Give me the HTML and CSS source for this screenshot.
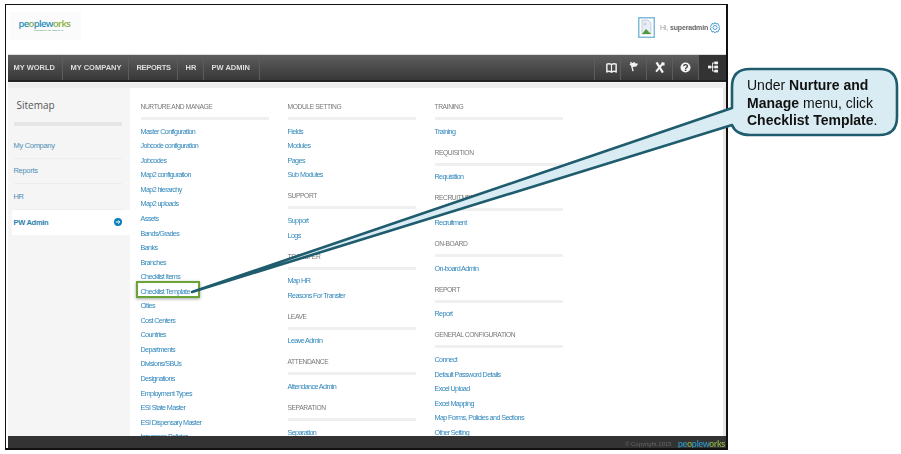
FILE: index.html
```html
<!DOCTYPE html>
<html lang="en">
<head>
<meta charset="utf-8">
<title>Sitemap</title>
<link rel="stylesheet" href="styles.css">
</head>
<body>
<div class="frame">
  <header class="top">
    <div class="logo">
      <div class="logo-word"><span class="b">pe</span><span class="g">o</span><span class="b">ple</span><span class="b">w</span><span class="g">o</span><span class="g">rks</span></div>
      <div class="logo-tag">PRESENTS LEADERSHIP</div>
    </div>
    <div class="user">
      <svg class="avatar" width="17" height="21" viewBox="0 0 17 21"><rect x="0.75" y="0.75" width="15.5" height="19.5" fill="#fff" stroke="#7fbcd9" stroke-width="1.5"/><path d="M4 3h6l3 3v11H4z" fill="#e8eef8" stroke="#b4bcc8" stroke-width="0.7"/><path d="M4 17l4-5 2 2 3 3z" fill="#4f9a3c"/><circle cx="7" cy="7" r="1.5" fill="#c4d3ea"/></svg>
      <span class="hi">Hi, <b>superadmin</b></span>
      <svg class="gear" width="10" height="11" viewBox="0 0 20 22"><path d="M10 1l2 3 4-1 1 4 3 2-2 2 2 3-3 2-1 4-4-1-2 3-2-3-4 1-1-4-3-2 2-3-2-2 3-2 1-4 4 1z" fill="none" stroke="#4f9fd0" stroke-width="2"/><circle cx="10" cy="11" r="4" fill="none" stroke="#4f9fd0" stroke-width="2"/></svg>
    </div>
  </header>

  <nav class="nav">
    <a class="nav-item nav-first">MY WORLD</a>
    <a class="nav-item nav-second">MY COMPANY</a>
    <a class="nav-item nav-third">REPORTS</a>
    <a class="nav-item nav-fourth">HR</a>
    <a class="nav-item nav-fifth">PW ADMIN</a>
    <div class="nav-icons">
      <span class="cell cell-book"><svg width="11" height="11" viewBox="0 0 13 13"><path d="M1 2.5c2-.8 4-.6 5.500.5 1.500-1.100 3.500-1.300 5.500-.5v9c-2-.8-4-.6-5.500.5-1.500-1.100-3.500-1.300-5.500-.5z" fill="none" stroke="#f1f1f1" stroke-width="1.700"/><path d="M6.500 3v9" stroke="#f1f1f1" stroke-width="1.400"/></svg></span>
      <span class="cell"><svg width="12" height="13" viewBox="0 0 13 14"><path d="M3 1l2.500 10" stroke="#f1f1f1" stroke-width="1.500" fill="none"/><path d="M1.500 3.500L7 1l1 1.500 3 .5-2 3-4 .5-1.500-1z" fill="#f1f1f1"/></svg></span>
      <span class="cell"><svg width="11" height="13" viewBox="0 0 13 14"><path d="M3 1l7.500 12" stroke="#f4f4f4" stroke-width="2.600" fill="none"/><path d="M11 1.500L2.500 12" stroke="#f4f4f4" stroke-width="2.400" fill="none"/><path d="M8.500 1h4v3.500h-2.500z" fill="#f4f4f4"/></svg></span>
      <span class="cell"><svg width="11" height="11" viewBox="0 0 12 12"><circle cx="6" cy="6" r="5.500" fill="#f4f4f4"/><path d="M4 4.700c0-2.400 4.100-2.400 4.100-.1 0 1.400-2 1.400-2 3" fill="none" stroke="#3d3d3d" stroke-width="1.400"/><rect x="5.300" y="8.300" width="1.600" height="1.500" fill="#3d3d3d"/></svg></span>
      <span class="cell cell-on"><svg width="10" height="12" viewBox="0 0 11 13"><path d="M2 6.500h6M5 2v9M5 2h3M5 11h3" stroke="#f1f1f1" stroke-width="1" fill="none"/><rect x="0" y="5" width="3.500" height="3" fill="#f1f1f1"/><rect x="7" y="0.500" width="4" height="3" fill="#f1f1f1"/><rect x="7" y="5" width="4" height="3" fill="#f1f1f1"/><rect x="7" y="9.500" width="4" height="3" fill="#f1f1f1"/></svg></span>
    </div>
  </nav>
  <div class="band"></div>

  <div class="body">
    <aside class="side">
      <h2 class="side-title">Sitemap</h2>
      <div class="side-rule"></div>
      <ul class="side-list">
        <li class="side-item">My Company</li>
        <li class="side-item">Reports</li>
        <li class="side-item">HR</li>
        <li class="side-item side-on">PW Admin
          <svg class="side-dot" width="8" height="8" viewBox="0 0 8 8"><circle cx="4" cy="4" r="4" fill="#0b7fc0"/><path d="M1.800 4h4M4.200 2.400L5.800 4 4.200 5.600" stroke="#fff" stroke-width="1" fill="none"/></svg>
        </li>
      </ul>
    </aside>
    <main class="cols">
      <section class="col">
        <h3 class="head">NURTURE AND MANAGE</h3>
        <ul class="links">
          <li>Master Configuration</li><li>Jobcode configuration</li><li>Jobcodes</li><li>Map2 configuration</li><li>Map2 hierarchy</li><li>Map2 uploads</li><li>Assets</li><li>Bands/Grades</li><li>Banks</li><li>Branches</li><li>Checklist Items</li><li>Checklist Template</li><li>Cities</li><li>Cost Centers</li><li>Countries</li><li>Departments</li><li>Divisions/SBUs</li><li>Designations</li><li>Employment Types</li><li>ESI State Master</li><li>ESI Dispensary Master</li><li>Insurance Policies</li>
        </ul>
      </section>
      <section class="col">
        <h3 class="head">MODULE SETTING</h3>
        <ul class="links"><li>Fields</li><li>Modules</li><li>Pages</li><li>Sub Modules</li></ul>
        <h3 class="head">SUPPORT</h3>
        <ul class="links"><li>Support</li><li>Logs</li></ul>
        <h3 class="head">TRANSFER</h3>
        <ul class="links"><li>Map HR</li><li>Reasons For Transfer</li></ul>
        <h3 class="head">LEAVE</h3>
        <ul class="links"><li>Leave Admin</li></ul>
        <h3 class="head">ATTENDANCE</h3>
        <ul class="links"><li>Attendance Admin</li></ul>
        <h3 class="head">SEPARATION</h3>
        <ul class="links"><li>Separation</li></ul>
      </section>
      <section class="col">
        <h3 class="head">TRAINING</h3>
        <ul class="links"><li>Training</li></ul>
        <h3 class="head">REQUISITION</h3>
        <ul class="links"><li>Requisition</li></ul>
        <h3 class="head">RECRUITMENT</h3>
        <ul class="links"><li>Recruitment</li></ul>
        <h3 class="head">ON-BOARD</h3>
        <ul class="links"><li>On-board Admin</li></ul>
        <h3 class="head">REPORT</h3>
        <ul class="links"><li>Report</li></ul>
        <h3 class="head">GENERAL CONFIGURATION</h3>
        <ul class="links"><li>Connect</li><li>Default Password Details</li><li>Excel Upload</li><li>Excel Mapping</li><li>Map Forms, Policies and Sections</li><li>Other Setting</li></ul>
      </section>
    </main>
  </div>

  <footer class="foot">
    <span class="copy">© Copyright 2015</span>
    <span class="foot-logo"><span class="b">pe</span><span class="g">o</span><span class="b">ple</span><span class="b">w</span><span class="g">o</span><span class="g">rks</span></span>
  </footer>
</div>

<div class="mark"></div>
<svg class="callout-shape" width="901" height="454" viewBox="0 0 901 454">
  <path d="M750 69H879Q897 69 897 87V117Q897 135 879 135H750Q736 135 732 125L192 292L732 108V87Q732 69 750 69Z" fill="#daecf3" stroke="#1f5c6e" stroke-width="2.600" stroke-linejoin="round"/>
</svg>
<p class="callout-text">Under <b>Nurture and Manage</b> menu, click <b>Checklist Template</b>.</p>
</body>
</html>
```
FILE: styles.css
```css
* { box-sizing: border-box; }
html, body { margin: 0; padding: 0; }
body {
  width: 901px;
  height: 454px;
  overflow: hidden;
  background: #fff;
  font-family: "Liberation Sans", Arial, sans-serif;
  position: relative;
}
ul { list-style: none; margin: 0; padding: 0; }
h2, h3, p { margin: 0; font-weight: normal; }

.frame {
  width: 723px;
  height: 446px;
  margin: 4px 0 0 5px;
  border-style: solid;
  border-color: #111;
  border-width: 1.5px 2px 2px 1.5px;
  padding-left: 1.5px;
  background: #fff;
  overflow: hidden;
  display: flex;
  flex-direction: column;
}
.top, .nav, .body, .foot { filter: blur(0.3px); }

/* Header */
.top {
  height: 48.500px;
  flex: none;
  display: flex;
  justify-content: space-between;
  align-items: flex-start;
  padding: 7px 6px 0 2px;
}
.logo {
  width: 71px;
  height: 28px;
  background: #fbfbfb;
  padding: 7px 0 0 9px;
}
.logo-word {
  font-size: 9.500px;
  line-height: 10px;
  font-weight: 600;
  letter-spacing: -0.650px;
  font-family: "Open Sans", sans-serif;
}
.logo-tag {
  font-size: 2.500px;
  line-height: 4px;
  color: #4d9a6b;
  padding-left: 15px;
  white-space: nowrap;
}
.b { color: #2b8fbe; }
.g { color: #8cae3f; }
.user {
  display: flex;
  align-items: center;
  height: 21px;
  margin-top: 5px;
}
.avatar { margin-right: 5px; }
.hi {
  font-size: 7px;
  color: #999;
  width: 50px;
  white-space: nowrap;
  letter-spacing: -0.150px;
}
.hi b { color: #666; }

/* Nav */
.nav {
  height: 28px;
  flex: none;
  display: flex;
  background: linear-gradient(#5e5e5e, #383838);
  border-top: 1px solid #ddd;
  border-bottom: 2px solid #222;
  padding-left: 6px;
}
.nav-item {
  display: flex;
  align-items: center;
  font-size: 7.500px;
  font-weight: bold;
  color: #ddd;
  letter-spacing: 0;
  white-space: nowrap;
  border-right: 1px solid #5c5c5c;
}
.nav-first { width: 49px; }
.nav-second { width: 66px; padding-left: 8px; }
.nav-third { width: 49px; padding-left: 8px; letter-spacing: -0.300px; }
.nav-fourth { width: 26px; padding-left: 8px; }
.nav-fifth { width: 56px; padding-left: 8px; }
.nav-icons { margin-left: auto; display: flex; }
.cell {
  width: 26px;
  display: flex;
  align-items: center;
  justify-content: center;
  border-left: 1px solid #5c5c5c;
}
.cell-book { justify-content: flex-end; padding-right: 3px; }
.cell-on { width: 28px; background: #333; }

.band {
  height: 6px;
  flex: none;
  background: #eee;
  border-top: 1px solid #f6f6f6;
}

/* Body */
.body {
  height: 348.500px;
  flex: none;
  display: flex;
  overflow: hidden;
  border-right: 3px solid #e8e8e8;
}
.side {
  width: 122px;
  flex: none;
  background: #f5f5f5;
  padding: 10.500px 0 0 6px;
}
.side-title {
  font-family: "Open Sans", sans-serif;
  font-size: 10px;
  line-height: 14px;
  color: #555;
  padding-left: 3px;
}
.side-rule {
  width: 108px;
  height: 4px;
  margin-top: 10px;
  background: #e6e6e6;
}
.side-list { margin-top: 7px; }
.side-item {
  height: 25.500px;
  display: flex;
  align-items: center;
  font-size: 7.500px;
  letter-spacing: -0.300px;
  color: #4f8fb5;
  border-bottom: 1px solid #ededed;
  width: 108px;
}
.side-on {
  width: 118px;
  margin-left: -2px;
  padding: 0 8px 0 2px;
  justify-content: space-between;
  background: #fff;
  font-weight: bold;
  color: #2b7fb0;
  border-bottom: 0;
}
.side-dot { flex: none; }

.cols {
  flex: 1;
  display: flex;
  gap: 19px;
  padding: 14.500px 0 0 11px;
  overflow: hidden;
}
.col { width: 128px; flex: none; }
.head {
  font-size: 6.700px;
  line-height: 10px;
  letter-spacing: -0.400px;
  color: #777;
  white-space: nowrap;
  padding-bottom: 5px;
  border-bottom: 3px solid #f0f0f0;
  height: 18px;
}
.links {
  padding-top: 4.700px;
  margin-bottom: 8.450px;
}
.links li {
  font-size: 7.200px;
  line-height: 14.550px;
  letter-spacing: -0.600px;
  color: #2f86bb;
  white-space: nowrap;
}

/* Footer */
.foot {
  flex: 1;
  background: #333;
  display: flex;
  justify-content: flex-end;
  align-items: center;
  padding-right: 1px;
  padding-top: 4px;
  gap: 6px;
  overflow: hidden;
}
.copy {
  font-size: 6px;
  line-height: 8px;
  color: #666;
}
.foot-logo {
  font-family: "Open Sans", sans-serif;
  font-size: 8.500px;
  font-weight: 600;
  line-height: 8px;
  letter-spacing: -0.500px;
}

/* Annotation overlays */
.mark {
  position: absolute;
  left: 136px;
  top: 281px;
  width: 64px;
  height: 17px;
  border: 2px solid #6aa336;
  box-shadow: 0 1px 3px rgba(0,0,0,.35);
}
.callout-shape {
  position: absolute;
  left: 0;
  top: 0;
}
.callout-text {
  position: absolute;
  left: 747px;
  top: 77px;
  width: 145px;
  font-size: 14px;
  line-height: 17.700px;
  color: #111;
}
```
